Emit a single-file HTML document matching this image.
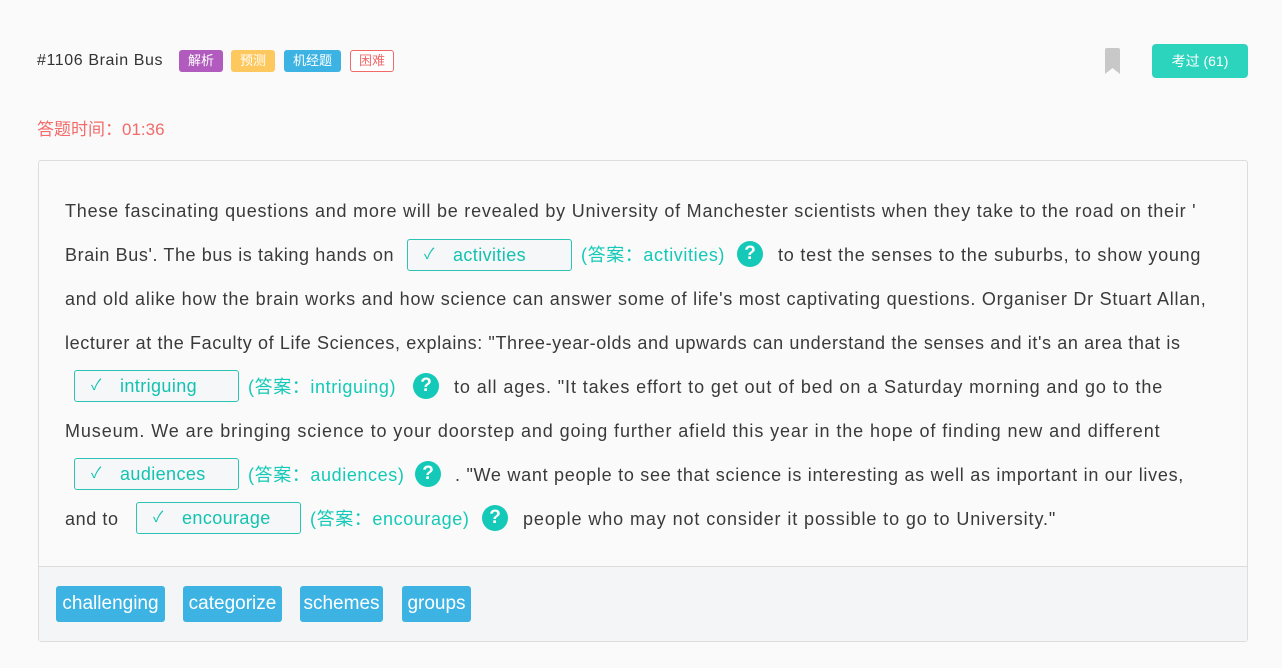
<!DOCTYPE html>
<html><head><meta charset="utf-8"><style>
body{margin:0;width:1282px;height:668px;background:#fafafa;font-family:"Liberation Sans","Noto Sans CJK SC",sans-serif;position:relative;overflow:hidden;color:#333}
.a{position:absolute;white-space:nowrap}
.tag{position:absolute;top:50px;height:22px;line-height:22px;font-size:13px;border-radius:3px;color:#fff;text-align:center}
.t{position:absolute;font-size:18px;white-space:nowrap;color:#3a3a3a;line-height:24px}
.box{position:absolute;height:30px;border:1px solid #2bc4b4;border-radius:3px;background:#f5f7f9;color:#14c2b0;font-size:18px;line-height:30px}
.box .ck{position:absolute;left:16px;top:0;font-size:15px}
.box .w{position:absolute;left:45px;top:0;letter-spacing:0.4px}
.ans{position:absolute;color:#14c9b7;font-size:18px;line-height:24px;white-space:nowrap;letter-spacing:0.6px}
.q{position:absolute;width:26px;height:26px;border-radius:50%;background:#14c9b7;color:#fff;font-weight:bold;font-size:19px;text-align:center;line-height:26px}
.chip{position:absolute;top:586px;height:36px;line-height:36px;background:#3db3e3;color:#fff;font-size:19px;border-radius:3px;text-align:center}
</style></head><body>
<div class="a" style="left:37px;top:52px;font-size:16px;color:#333;letter-spacing:0.6px">#1106 Brain Bus</div>
<div class="tag" style="left:179px;width:44px;background:#b05bbd">解析</div>
<div class="tag" style="left:231px;width:44px;background:#fdc85e">预测</div>
<div class="tag" style="left:284px;width:57px;background:#3db3e3">机经题</div>
<div class="tag" style="left:350px;width:42px;height:20px;line-height:20px;border:1px solid #f06a6a;color:#f06a6a;background:#fff">困难</div>
<svg class="a" style="left:1104px;top:48px" width="17" height="26" viewBox="0 0 17 26"><path d="M1 2Q1 0 3 0H14Q16 0 16 2V26L8.5 20L1 26Z" fill="#c8c8c8"/></svg>
<div class="a" style="left:1152px;top:44px;width:96px;height:34px;line-height:34px;background:#2cd3bd;color:#fff;border-radius:4px;text-align:center;font-size:14px">考过 (61)</div>
<div class="a" style="left:37px;top:115px;font-size:17px;color:#f36b6b">答题时间：01:36</div>
<div class="a" style="left:38px;top:160px;width:1208px;height:480px;border:1px solid #ddd;border-radius:3px;background:#fafafa"></div>
<div class="a" style="left:39px;top:566px;width:1208px;height:74px;border-top:1px solid #ddd;background:#f4f5f7"></div>

<div class="t" style="left:65px;top:199px;letter-spacing:0.78px">These fascinating questions and more will be revealed by University of Manchester scientists when they take to the road on their '</div>
<div class="t" style="left:65px;top:243px;letter-spacing:0.6px">Brain Bus'. The bus is taking hands on</div>
<div class="box" style="left:407px;top:239px;width:163px"><span class="ck">✓</span><span class="w">activities</span></div>
<div class="ans" style="left:581px;top:243px">(答案：activities)</div>
<div class="q" style="left:737px;top:241px">?</div>
<div class="t" style="left:778px;top:243px;letter-spacing:0.77px">to test the senses to the suburbs, to show young</div>
<div class="t" style="left:65px;top:287px;letter-spacing:0.75px">and old alike how the brain works and how science can answer some of life's most captivating questions. Organiser Dr Stuart Allan,</div>
<div class="t" style="left:65px;top:331px;letter-spacing:0.62px">lecturer at the Faculty of Life Sciences, explains: "Three-year-olds and upwards can understand the senses and it's an area that is</div>
<div class="box" style="left:74px;top:370px;width:163px"><span class="ck">✓</span><span class="w">intriguing</span></div>
<div class="ans" style="left:248px;top:375px">(答案：intriguing)</div>
<div class="q" style="left:413px;top:373px">?</div>
<div class="t" style="left:454px;top:375px;letter-spacing:0.9px">to all ages. "It takes effort to get out of bed on a Saturday morning and go to the</div>
<div class="t" style="left:65px;top:419px;letter-spacing:0.9px">Museum. We are bringing science to your doorstep and going further afield this year in the hope of finding new and different</div>
<div class="box" style="left:74px;top:458px;width:163px"><span class="ck">✓</span><span class="w">audiences</span></div>
<div class="ans" style="left:248px;top:463px">(答案：audiences)</div>
<div class="q" style="left:415px;top:461px">?</div>
<div class="t" style="left:455px;top:463px;letter-spacing:0.72px">. "We want people to see that science is interesting as well as important in our lives,</div>
<div class="t" style="left:65px;top:507px;letter-spacing:0.6px">and to</div>
<div class="box" style="left:136px;top:502px;width:163px"><span class="ck">✓</span><span class="w">encourage</span></div>
<div class="ans" style="left:310px;top:507px">(答案：encourage)</div>
<div class="q" style="left:482px;top:505px">?</div>
<div class="t" style="left:523px;top:507px;letter-spacing:0.9px">people who may not consider it possible to go to University."</div>

<div class="chip" style="left:56px;width:109px">challenging</div>
<div class="chip" style="left:183px;width:99px">categorize</div>
<div class="chip" style="left:300px;width:83px">schemes</div>
<div class="chip" style="left:402px;width:69px">groups</div>
</body></html>
